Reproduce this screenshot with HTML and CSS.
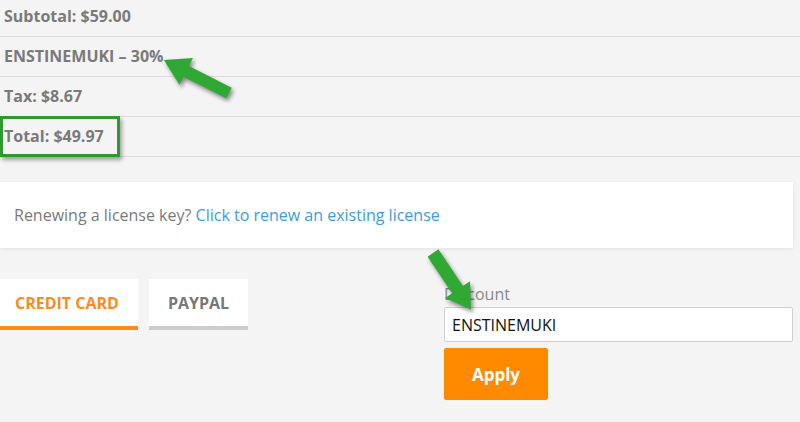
FILE: index.html
```html
<!DOCTYPE html>
<html lang="en">
<head>
  <meta charset="UTF-8">
  <title>Checkout</title>
  <link rel="stylesheet" href="styles.css">
</head>
<body>
  <div class="page">
    <div class="totals">
      <div class="row">Subtotal: $59.00</div>
      <div class="row">ENSTINEMUKI &ndash; 30%</div>
      <div class="row">Tax: $8.67</div>
      <div class="row">Total: $49.97<span class="mark"></span></div>
    </div>

    <div class="renew">
      Renewing a license key? <a href="#">Click to renew an existing license</a>
    </div>

    <div class="pay">
      <div class="tabs">
        <div class="tab active">CREDIT CARD</div>
        <div class="tab">PAYPAL</div>
      </div>
      <form class="discount">
        <label>Discount</label>
        <input type="text" value="ENSTINEMUKI">
        <button type="button">Apply</button>
      </form>
    </div>

    <!-- annotation arrows -->
    <svg class="arrows" width="800" height="422" viewBox="0 0 800 422">
      <polygon transform="translate(229 96) rotate(206.9)" points="0,-6 48,-6 48,-15 73,0 48,15 48,6 0,6" />
      <polygon transform="translate(433 256) rotate(56.1)" points="0,-6.5 44,-6.5 44,-15 68,0 44,15 44,6.5 0,6.5" />
    </svg>
  </div>
</body>
</html>
```

FILE: styles.css
```css
body {
  margin: 0;
  background: #f4f4f4;
  font-family: 'Open Sans', sans-serif;
  color: #7a7a7a;
  overflow: hidden;
}

.page {
  position: relative;
  width: 793px;
  height: 422px;
}

.totals {
  margin-top: -3px;
}

.row {
  position: relative;
  height: 39px;
  line-height: 39px;
  padding-left: 4px;
  font-size: 16px;
  font-weight: bold;
  border-bottom: 1px solid #dcdcdc;
  margin-right: -7px;
}

.mark {
  position: absolute;
  left: 0;
  top: -1px;
  width: 114px;
  height: 35px;
  border: 3px solid #2e9a2e;
  box-shadow: 2px 3px 4px rgba(0,0,0,0.35);
}

.renew {
  margin-top: 25px;
  height: 66px;
  line-height: 66px;
  padding-left: 14px;
  background: white;
  font-size: 16px;
  box-shadow: 0 1px 4px rgba(0,0,0,0.08);
}

.renew a {
  color: #3d9be4;
  text-decoration: none;
}

.pay {
  display: flex;
  margin-top: 31px;
}

.tabs {
  display: flex;
  gap: 11px;
  width: 444px;
  align-items: flex-start;
}

.tab {
  background: white;
  height: 47px;
  line-height: 48px;
  padding: 0 19px;
  font-size: 16px;
  font-weight: bold;
  color: #777;
  border-bottom: 4px solid #cccccc;
}

.tab.active {
  padding: 0 19px 0 15px;
  color: #ff8a1c;
  border-bottom-color: #ff8a1c;
}

.discount {
  flex: 1;
  display: flex;
  flex-direction: column;
  align-items: flex-start;
}

.discount label {
  font-size: 16px;
  color: #888;
  margin-top: 3px;
  line-height: 24px;
}

.discount input {
  box-sizing: border-box;
  width: 100%;
  height: 35px;
  margin-top: 1px;
  padding: 0 7px;
  border: 1px solid #cfcfcf;
  border-radius: 2px;
  font-family: 'Open Sans', sans-serif;
  font-size: 16px;
  color: #111;
  background: white;
}

.discount button {
  margin-top: 6px;
  width: 104px;
  height: 52px;
  background: #ff8a00;
  color: white;
  border: none;
  border-radius: 2px;
  font-family: 'Open Sans', sans-serif;
  font-size: 17px;
  font-weight: bold;
}

.arrows {
  position: absolute;
  left: 0;
  top: 0;
  pointer-events: none;
  fill: #2fa834;
  filter: drop-shadow(2px 3px 2px rgba(0,0,0,0.45));
}
```
